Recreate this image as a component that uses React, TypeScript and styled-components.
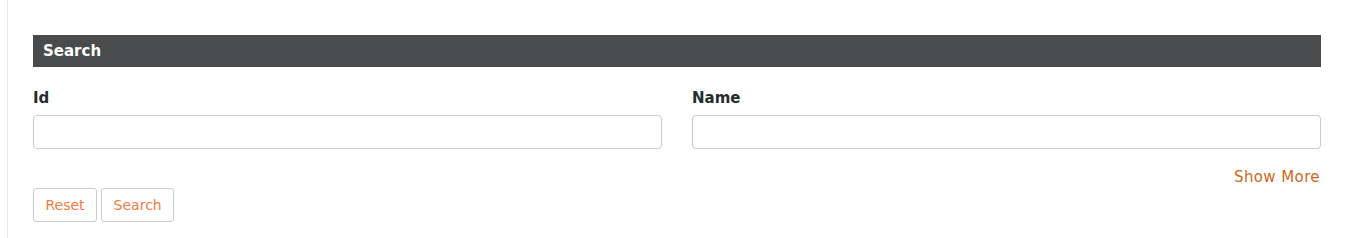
import React from "react";
import styled, { createGlobalStyle } from "styled-components";

const Global = createGlobalStyle`
  html, body { margin: 0; padding: 0; background: #fff; }
  body { font-family: "DejaVu Sans", "Open Sans", Arial, sans-serif; }
  * { box-sizing: border-box; }
`;

const Page = styled.div`
  margin-left: 7px;
  border-left: 1px solid #e6e6e6;
  padding: 35px 25px 16px 25px;
  min-height: 238px;
`;

const Header = styled.div`
  height: 32px;
  background: #4a4b4d;
  color: #fff;
  font-weight: 700;
  font-size: 15px;
  display: flex;
  align-items: center;
  padding-left: 10px;
  padding-bottom: 1px;
`;

const FieldsRow = styled.div`
  display: grid;
  grid-template-columns: 1fr 1fr;
  column-gap: 30px;
  margin-top: 21px;
`;

const Field = styled.div`
  display: flex;
  flex-direction: column;
`;

const Label = styled.label`
  font-size: 15px;
  line-height: 20px;
  font-weight: 700;
  color: #262b31;
  margin-bottom: 7px;
`;

const Input = styled.input`
  height: 34px;
  border: 1px solid #cccccc;
  border-radius: 4px;
  padding: 0 10px;
  font-size: 14px;
  font-family: inherit;
  outline: none;
`;

const MoreRow = styled.div`
  display: flex;
  justify-content: flex-end;
  margin-top: 17px;
`;

const MoreLink = styled.a`
  color: #c9691a;
  font-size: 15px;
  line-height: 22px;
  letter-spacing: 0.4px;
  cursor: pointer;
  padding-right: 1px;
`;

const Actions = styled.div`
  display: flex;
  gap: 4px;
`;

const Button = styled.button`
  height: 34px;
  padding: 0 11.5px 1px;
  border: 1px solid #cccccc;
  border-radius: 3px;
  background: #fff;
  color: #f47a3e;
  font-family: inherit;
  font-size: 14px;
  font-weight: 400;
  cursor: pointer;
`;

export default function App() {
  return (
    <>
      <Global />
      <Page>
        <Header>Search</Header>
        <FieldsRow>
          <Field>
            <Label>Id</Label>
            <Input />
          </Field>
          <Field>
            <Label>Name</Label>
            <Input />
          </Field>
        </FieldsRow>
        <MoreRow>
          <MoreLink>Show More</MoreLink>
        </MoreRow>
        <Actions>
          <Button>Reset</Button>
          <Button>Search</Button>
        </Actions>
      </Page>
    </>
  );
}
